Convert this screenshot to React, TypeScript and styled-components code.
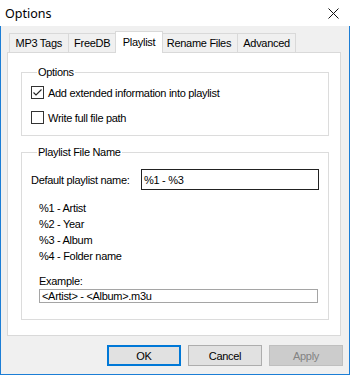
import { FC } from 'react';
import styled, { createGlobalStyle } from 'styled-components';

const GlobalStyle = createGlobalStyle`
    html, body {
        margin: 0;
        padding: 0;
        background: #fff;
    }
    body {
        font-family: "Liberation Sans", Arial, sans-serif;
        font-size: 11px;
        letter-spacing: -0.3px;
        color: #000;
    }
`;

const Window = styled.div`
    width: 350px;
    height: 375px;
    box-sizing: border-box;
    display: flex;
    flex-direction: column;
    background: #fff;
    overflow: hidden;
`;

const TitleBar = styled.div`
    height: 26px;
    flex: none;
    display: flex;
    align-items: center;
    justify-content: space-between;
    padding: 0 11px 0 5px;
    font-family: "Noto Sans", "Open Sans", sans-serif;
    font-size: 12.5px;
    letter-spacing: 0;
`;

const Body = styled.div`
    flex: 1;
    display: flex;
    flex-direction: column;
    background: #f0f0f0;
    border: 1px solid #1c7ed6;
    border-top: none;
    padding: 5px 6px 8px 6px;
    min-height: 0;
`;

const TabRow = styled.div`
    display: flex;
    align-items: flex-end;
    height: 21px;
    padding-left: 2px;
    position: relative;
    z-index: 1;
    flex: none;
`;

const Tab = styled.div<{ $active?: boolean }>`
    box-sizing: border-box;
    height: ${p => (p.$active ? '22px' : '19px')};
    margin: ${p => (p.$active ? '0 -2px -1px -2px' : '0 0 0 -1px')};
    padding: ${p => (p.$active ? '0 7px 2px' : '0 5.6px')};
    border: 1px solid #d9d9d9;
    border-bottom: none;
    background: ${p => (p.$active ? '#fff' : '#f0f0f0')};
    display: flex;
    align-items: center;
    position: relative;
    z-index: ${p => (p.$active ? 2 : 0)};
    white-space: nowrap;
    &:first-child {
        margin-left: 0;
    }
`;

const Panel = styled.div`
    flex: 1;
    display: flex;
    flex-direction: column;
    background: #fff;
    border: 1px solid #d9d9d9;
    margin-right: 2px;
    padding: 13px 11px 0 13px;
    min-height: 0;
`;

const Group = styled.fieldset<{ $gap?: number }>`
    margin: 0 0 ${p => p.$gap ?? 0}px 0;
    min-width: 0;
    border: 1px solid #dcdcdc;
    padding: 7px 9px 11px 9px;
    display: flex;
    flex-direction: column;
`;

const Legend = styled.legend`
    padding: 0 1px;
    margin-left: 6px;
    line-height: 13px;
`;

const CheckRow = styled.label`
    display: flex;
    align-items: center;
    height: 13px;
    gap: 4px;
    & + & {
        margin-top: 12px;
    }
`;

const Box = styled.span`
    box-sizing: border-box;
    width: 13px;
    height: 13px;
    border: 1px solid #333;
    background: #fff;
    display: inline-flex;
    align-items: center;
    justify-content: center;
    flex: none;
`;

const NameRow = styled.div`
    display: flex;
    align-items: center;
    margin-top: 3px;
`;

const FieldLabel = styled.span`
    width: 110px;
    flex: none;
`;

const TextField = styled.div<{ $focused?: boolean }>`
    box-sizing: border-box;
    height: ${p => (p.$focused ? '21px' : '16px')};
    border: 1px solid ${p => (p.$focused ? '#222' : '#a5a5a5')};
    background: #fff;
    display: flex;
    align-items: center;
    padding-left: 2px;
    flex: 1;
`;

const Indent = styled.div`
    padding: 0 1px 0 8px;
    display: flex;
    flex-direction: column;
`;

const Codes = styled.div`
    margin-top: 10px;
    line-height: 16px;
`;

const ExampleLabel = styled.div`
    margin-top: 9px;
    line-height: 16px;
`;

const ButtonRow = styled.div`
    display: flex;
    justify-content: flex-end;
    gap: 7px;
    margin-top: 9px;
    flex: none;
`;

const Button = styled.button<{ $default?: boolean }>`
    box-sizing: border-box;
    width: 74px;
    height: 21px;
    font: inherit;
    letter-spacing: inherit;
    color: #000;
    background: #e1e1e1;
    border: ${p => (p.$default ? '2px solid #0078d7' : '1px solid #adadad')};
    padding: 0;
    &:disabled {
        background: #cccccc;
        border-color: #bfbfbf;
        color: #838383;
    }
`;

const tabs = ['MP3 Tags', 'FreeDB', 'Playlist', 'Rename Files', 'Advanced'];

const Check: FC<{ checked?: boolean }> = ({ checked }) => (
    <Box>
        {checked && (
            <svg width="11" height="11" viewBox="0 0 11 11">
                <polyline points="1.5,5.5 4,8 9.5,2.5" fill="none" stroke="#222" strokeWidth="1.1" />
            </svg>
        )}
    </Box>
);

const App: FC = () => (
    <Window>
        <GlobalStyle />
        <TitleBar>
            <span>Options</span>
            <svg width="11" height="11" viewBox="0 0 11 11">
                <path d="M0.5 0.5 L10.5 10.5 M10.5 0.5 L0.5 10.5" stroke="#111" strokeWidth="1" />
            </svg>
        </TitleBar>
        <Body>
            <TabRow>
                {tabs.map(t => (
                    <Tab key={t} $active={t === 'Playlist'}>{t}</Tab>
                ))}
            </TabRow>
            <Panel>
                <Group $gap={10}>
                    <Legend>Options</Legend>
                    <CheckRow><Check checked />Add extended information into playlist</CheckRow>
                    <CheckRow><Check />Write full file path</CheckRow>
                </Group>
                <Group style={{ paddingTop: 7, paddingBottom: 16 }}>
                    <Legend>Playlist File Name</Legend>
                    <NameRow>
                        <FieldLabel>Default playlist name:</FieldLabel>
                        <TextField $focused>%1 - %3</TextField>
                    </NameRow>
                    <Indent>
                        <Codes>
                            <div>%1 - Artist</div>
                            <div>%2 - Year</div>
                            <div>%3 - Album</div>
                            <div>%4 - Folder name</div>
                        </Codes>
                        <ExampleLabel>Example:</ExampleLabel>
                        <TextField>&lt;Artist&gt; - &lt;Album&gt;.m3u</TextField>
                    </Indent>
                </Group>
            </Panel>
            <ButtonRow>
                <Button $default>OK</Button>
                <Button>Cancel</Button>
                <Button disabled>Apply</Button>
            </ButtonRow>
        </Body>
    </Window>
);

export default App;
